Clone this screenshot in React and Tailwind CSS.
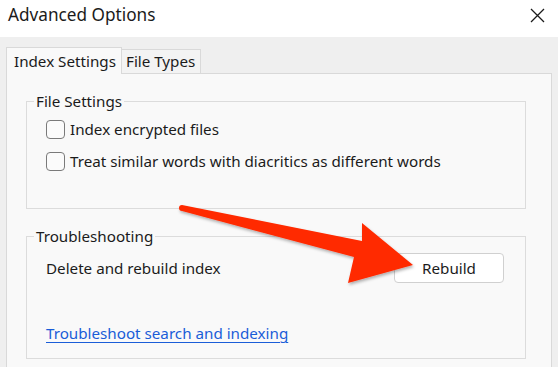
import React from 'react';

function Checkbox({ label }) {
  return (
    <label className="flex h-[26px] items-center gap-[5px]">
      <span className="block h-[19px] w-[19px] rounded-[4px] border border-[#7a7a7a] bg-[#fbfbfb]"></span>
      <span>{label}</span>
    </label>
  );
}

function Group({ title, children, className }) {
  return (
    <fieldset className={'mx-[19px] mr-[25px] border border-[#dcdcdc] px-[6px] ' + className}>
      <legend className="ml-[1px] px-[2px] leading-[22px]">{title}</legend>
      <div className="pl-[13px]">{children}</div>
    </fieldset>
  );
}

export default function App() {
  return (
    <div
      className="relative h-[367px] w-[558px] overflow-hidden bg-[#efefef] text-[15.2px] text-[#1b1b1b]"
      style={{ fontFamily: '"Noto Sans", "Open Sans", sans-serif' }}
    >
      {/* title bar */}
      <div className="flex h-[37px] items-center justify-between bg-white pb-[7px] pl-[8px] pr-[13px]">
        <span className="text-[17.2px]">Advanced Options</span>
        <svg width="15" height="15" viewBox="0 0 15 15">
          <path d="M1 1 L14 14 M14 1 L1 14" stroke="#1b1b1b" strokeWidth="1.3" fill="none" />
        </svg>
      </div>

      {/* tabs */}
      <div className="flex items-end whitespace-nowrap pl-[6px] pt-[10px]">
        <div className="relative z-10 mb-[-1px] flex h-[27px] w-[116px] items-center border border-b-0 border-[#d9d9d9] bg-[#f9f9f9] pl-[7px]">
          Index Settings
        </div>
        <div className="flex h-[24px] w-[79px] items-center border border-l-0 border-b-0 border-[#d9d9d9] bg-[#f3f3f3] pl-[4px]">
          File Types
        </div>
      </div>

      {/* tab panel */}
      <div className="ml-[6px] mr-[6px] h-[320px] border border-[#d9d9d9] bg-[#f9f9f9] pt-[16px]">
        <Group title="File Settings" className="pb-[34px]">
          <div className="flex flex-col gap-[6px] pt-[4px]">
            <Checkbox label="Index encrypted files" />
            <Checkbox label="Treat similar words with diacritics as different words" />
          </div>
        </Group>

        <Group title="Troubleshooting" className="mt-[16px] pb-[14px]">
          <div className="flex items-center pt-[6px]">
            <span className="w-[348px]">Delete and rebuild index</span>
            <button className="h-[30px] w-[110px] rounded-[4px] border border-[#d0d0d0] bg-white">
              Rebuild
            </button>
          </div>
          <div className="mt-[39px] leading-[22px]">
            <a href="#" className="text-[#1a5dd8] underline underline-offset-[3px]">
              Troubleshoot search and indexing
            </a>
          </div>
        </Group>
      </div>

      {/* red annotation arrow */}
      <svg className="pointer-events-none absolute left-0 top-0" width="558" height="367" viewBox="0 0 558 367">
        <defs>
          <filter id="sh" x="-10%" y="-10%" width="130%" height="140%">
            <feDropShadow dx="1" dy="2" stdDeviation="1.5" floodColor="#000" floodOpacity="0.3" />
          </filter>
        </defs>
        <path
          d="M182 205 L362 241 L362 223 L413 265 L348 283 L354 257 L182 211 A3 3 0 0 1 182 205 Z"
          fill="#ff2a00"
          filter="url(#sh)"
        />
      </svg>
    </div>
  );
}
